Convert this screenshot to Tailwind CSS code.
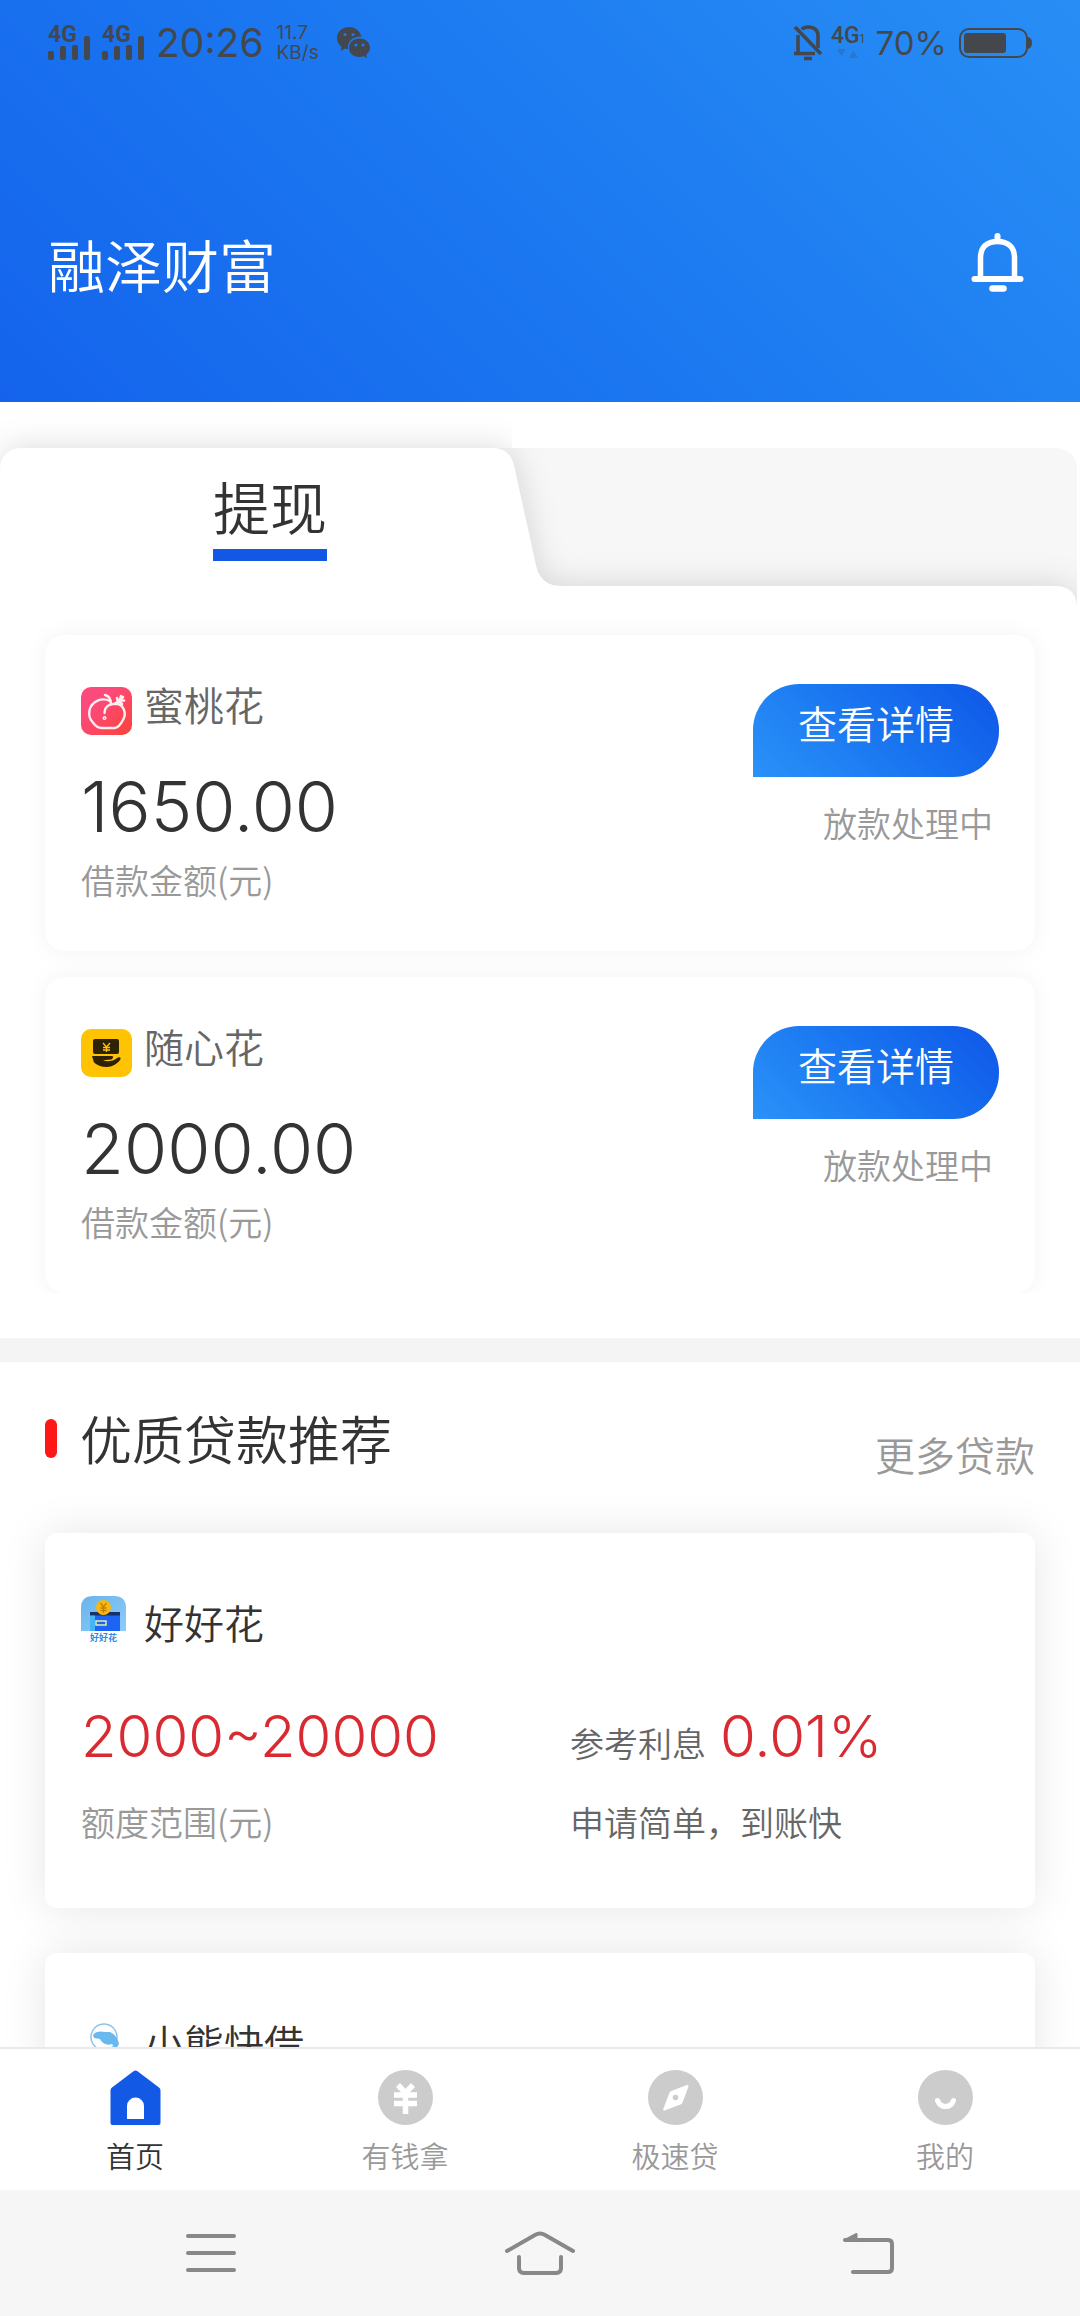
<!DOCTYPE html>
<html lang="zh-CN">
<head>
<meta charset="utf-8">
<meta name="viewport" content="width=device-width, initial-scale=1">
<title>融泽财富</title>
<script src="https://cdn.jsdelivr.net/npm/@tailwindcss/browser@4"></script>
</head>
<body class="flex h-screen flex-col overflow-hidden bg-white font-['Noto_Sans_CJK_SC',sans-serif] font-[350] text-[#333333]">

<header class="flex h-[402px] shrink-0 flex-col bg-linear-45 from-[#1563ec] to-[#288ef5]">
  <!-- Status bar -->
  <div class="flex h-[86px] items-center justify-between pr-[48px] pl-[48px] font-['Inter',sans-serif] font-normal text-[#44484c]">
    <div class="flex items-center">
      <svg class="h-[52px] w-[44px]" viewBox="0 -8 44 52" fill="currentColor" role="img" aria-label="4G">
        <text x="0" y="17" font-size="23" font-weight="700" font-family="Roboto, sans-serif">4G</text>
        <rect y="26" width="6" height="9" rx="2"/><rect x="12" y="21" width="6" height="14" rx="2"/><rect x="24" y="20" width="6" height="15" rx="2"/><rect x="36" y="11" width="6" height="24" rx="2"/>
      </svg>
      <svg class="ml-[10px] h-[52px] w-[44px]" viewBox="0 -8 44 52" fill="currentColor" role="img" aria-label="4G">
        <text x="0" y="17" font-size="23" font-weight="700" font-family="Roboto, sans-serif">4G</text>
        <rect y="26" width="6" height="9" rx="2"/><rect x="12" y="21" width="6" height="14" rx="2"/><rect x="24" y="20" width="6" height="15" rx="2"/><rect x="36" y="11" width="6" height="24" rx="2"/>
      </svg>
      <span class="ml-[10px] text-[39px] leading-[48px]">20:26</span>
      <span class="ml-[13px] flex flex-col text-[19px] leading-[20px]"><span>11.7</span><span>KB/s</span></span>
      <svg class="ml-[18px] h-[32px] w-[34px]" viewBox="0 0 34 32" fill="currentColor" role="img" aria-label="微信">
        <path d="M12 0C5 0 0 5 0 11c0 4 2 7 4.500 9L3.500 24l4.500-2.500q1.500.5 3 .5C10 14 16 9.500 24.500 9.500 23 4 18 0 12 0Z"/>
        <path d="M22.500 11.500C16.500 11.500 12 15.500 12 21s4.500 9 10.500 9q2 0 4-.7L30 31l-.8-3.500C31.500 26 33 23.500 33 21c0-5.500-4.500-9.500-10.500-9.500Z"/>
        <g fill="#1f78f0"><circle cx="8" cy="7.500" r="1.600"/><circle cx="16" cy="7.500" r="1.600"/><circle cx="19" cy="18" r="1.600"/><circle cx="26" cy="18" r="1.600"/></g>
      </svg>
    </div>
    <div class="flex items-center">
      <svg class="h-[36px] w-[30px]" viewBox="0 0 30 36" fill="none" stroke="currentColor" stroke-width="3.600" role="img" aria-label="静音">
        <path d="M5 28V10M9 4.500Q11 2 15 2c7 0 10 4 10 9v12M1 28.500h21M2 2l26 27"/><path d="M11 33.500h8"/>
      </svg>
      <svg class="ml-[8px] h-[52px] w-[36px]" viewBox="0 -8 36 52" fill="currentColor" role="img" aria-label="4G">
        <text x="0" y="18" font-size="23" font-weight="500" font-family="Roboto, sans-serif">4G</text>
        <text x="28" y="18" font-size="12" font-family="Roboto, sans-serif">1</text>
        <g opacity=".25"><path d="M6 24h9l-4.500 7zM18 33h9l-4.500-7z"/></g>
      </svg>
      <span class="ml-[9px] text-[33px] leading-[48px]">70%</span>
      <svg class="ml-[12px] h-[30px] w-[73px]" viewBox="0 0 73 30" role="img" aria-label="电量">
        <rect x="1" y="1" width="67" height="28" rx="9" fill="none" stroke="currentColor" stroke-width="2"/>
        <rect x="5" y="5" width="42" height="20" rx="3" fill="currentColor"/><path d="M69 9q4 1 4 6t-4 6z" fill="currentColor"/>
      </svg>
    </div>
  </div>
  <!-- Title -->
  <div class="flex flex-1 items-start justify-between pt-[137px] pr-[56px] pl-[48px] text-white">
    <h1 class="text-[57px] leading-[80px]">融泽财富</h1>
    <button type="button" aria-label="消息" class="mt-[8px]">
      <svg class="h-[62px] w-[54px]" viewBox="0 0 54 62" fill="none" stroke="white">
        <path d="M10.500 46V27C10.500 16 17 10.500 27.500 10.500S44.500 16 44.500 27v19" stroke-width="5.500"/>
        <path d="M27.500 5v5" stroke-width="6" stroke-linecap="round"/><path d="M4.500 48h46" stroke-width="6" stroke-linecap="round"/><path d="M22.500 57.500h11" stroke-width="6.500" stroke-linecap="round"/>
      </svg>
    </button>
  </div>
</header>

<main class="min-h-0 flex-1 overflow-hidden">
  <section class="relative overflow-hidden pt-[46px]">
    <!-- Folder-tab background -->
    <svg class="absolute top-0 left-0 h-[320px] w-full" viewBox="0 0 1080 320" preserveAspectRatio="none" aria-hidden="true">
      <defs><filter id="tabShadow" x="-10%" y="-20%" width="120%" height="140%"><feDropShadow dx="0" dy="0" stdDeviation="16" flood-color="#000" flood-opacity=".15"/></filter>
      <clipPath id="tabClip"><path d="M0 0H512V46H1054Q1077 46 1077 69V320H0Z"/></clipPath></defs>
      <path d="M440 46H1054Q1077 46 1077 69V210H440Z" fill="#f7f7f7"/>
      <g clip-path="url(#tabClip)"><path d="M0 70Q0 46 24 46H492Q510 46 514 64L536 164Q541 184 560 184H1054Q1077 184 1077 207V420H0Z" fill="white" filter="url(#tabShadow)"/></g>
    </svg>
    <div class="relative grid h-[138px] grid-cols-2" role="tablist">
      <button type="button" role="tab" aria-selected="true" class="flex flex-col items-center pt-[17px]">
        <span class="text-[57px] leading-[80px]">提现</span>
        <span class="mt-[4px] h-[12px] w-[114px] bg-[#1258e4]"></span>
      </button>
    </div>

    <div class="relative mb-[45px] flex flex-col gap-[26px] overflow-hidden px-[45px] pt-[49px]">
      <article class="flex items-start justify-between rounded-[20px] bg-white px-[36px] shadow-[0_0_24px_rgba(0,0,0,0.05)]">
        <div class="pt-[45px] pb-[47px]">
          <div class="flex items-start gap-[12px]">
            <svg class="mt-[7px] h-[48px] w-[51px]" viewBox="0 0 51 48" aria-hidden="true">
              <defs><linearGradient id="peach" x1="0" y1="0" x2="1" y2="1"><stop offset=".3" stop-color="#fd4a7c"/><stop offset="1" stop-color="#fb4338"/></linearGradient></defs>
              <rect width="51" height="48" rx="10" fill="url(#peach)"/>
              <g fill="none" stroke="#ffeef2" stroke-width="2.400" stroke-linecap="round" stroke-linejoin="round"><path d="M29 14C21 10 11 14 8.500 23c-1 6 1 10 3 12 3 4 5 6 9 6h13c4 0 7-5 9-9 3-6 0-14-6-15-7-1-13 2-13 9"/><path d="M24 8c4 1 6 4 6 9"/><circle cx="23.500" cy="31" r="1.300" stroke-width="1.500"/><path d="m34 17 8-7M36 11l1 4M40 9l-1 4M43 13.500h-4M41 17l-3-3" stroke-width="2.600"/></g>
            </svg>
            <h2 class="text-[40px] leading-[48px] text-[#666666]">蜜桃花</h2>
          </div>
          <p class="mt-[32px] font-['Inter',sans-serif] text-[70px] leading-[80px] font-light">1650.00</p>
          <p class="mt-[9px] text-[34px] leading-[48px] text-[#999999]">借款金额(元)</p>
        </div>
        <div class="flex flex-col items-end pt-[49px]">
          <button type="button" class="rounded-[46px] rounded-bl-none bg-linear-45 from-[#2b92f8] to-[#1156e8] px-[45px] pt-[14px] pb-[31px] text-[39px] leading-[48px] text-white">查看详情</button>
          <p class="mt-[22px] pr-[6px] text-[34px] leading-[48px] text-[#999999]">放款处理中</p>
        </div>
      </article>

      <article class="flex items-start justify-between rounded-[20px] bg-white px-[36px] shadow-[0_0_24px_rgba(0,0,0,0.05)]">
        <div class="pt-[45px] pb-[47px]">
          <div class="flex items-start gap-[12px]">
            <svg class="mt-[7px] h-[48px] w-[51px]" viewBox="0 0 51 48" aria-hidden="true">
              <rect width="51" height="48" rx="10" fill="#fec303"/>
              <rect x="12" y="10" width="26" height="15" rx="2" fill="#2f2104"/>
              <path d="m22 14 3.500 4 3.500-4M25.500 18v5M22 18.500h7M22 21h7" fill="none" stroke="#fec303" stroke-width="1.300"/>
              <path d="M11 27h20c2 0 1 3-1 3.500l-8 .7c4 1.500 8 1 11-.2l4-2.500c2-1 3.500.3 2 2.500-3 4-8 7-13 7-6 0-10-2-13-4.500Z" fill="#2f2104"/>
            </svg>
            <h2 class="text-[40px] leading-[48px] text-[#666666]">随心花</h2>
          </div>
          <p class="mt-[32px] font-['Inter',sans-serif] text-[70px] leading-[80px] font-light">2000.00</p>
          <p class="mt-[9px] text-[34px] leading-[48px] text-[#999999]">借款金额(元)</p>
        </div>
        <div class="flex flex-col items-end pt-[49px]">
          <button type="button" class="rounded-[46px] rounded-bl-none bg-linear-45 from-[#2b92f8] to-[#1156e8] px-[45px] pt-[14px] pb-[31px] text-[39px] leading-[48px] text-white">查看详情</button>
          <p class="mt-[22px] pr-[6px] text-[34px] leading-[48px] text-[#999999]">放款处理中</p>
        </div>
      </article>
    </div>
  </section>

  <div class="h-[24px] bg-[#f4f4f4]"></div>

  <section class="px-[45px] pt-[40px]">
    <div class="flex items-start justify-between">
      <div class="flex items-center gap-[23px]">
        <span class="h-[39px] w-[12px] rounded-full bg-[#fd1717]"></span>
        <h2 class="text-[52px] leading-[72px]">优质贷款推荐</h2>
      </div>
      <a href="#" class="mt-[24px] text-[40px] leading-[56px] text-[#999999]">更多贷款</a>
    </div>

    <div class="mt-[51px] flex flex-col gap-[45px]">
      <article class="rounded-[12px] bg-white px-[36px] pt-[63px] pb-[62px] shadow-[0_0_45px_rgba(0,0,0,0.1)]">
        <div class="flex items-start gap-[18px]">
          <svg class="h-[50px] w-[45px]" viewBox="0 0 45 50" aria-hidden="true">
            <defs><linearGradient id="wallet" x1="0" y1="0" x2="1" y2="1"><stop stop-color="#69b3ec"/><stop offset="1" stop-color="#8ccdf8"/></linearGradient></defs>
            <path d="M0 35V12Q0 0 12 0h21q12 0 12 12v23Z" fill="url(#wallet)"/>
            <path d="M9 16h30v5H9z" fill="#17306f"/><circle cx="22.500" cy="11.500" r="7.500" fill="#f8b90d"/><path d="m19.500 7 3 4 3-4M22.500 11v6M19.500 12h6M19.500 14.500h6" stroke="#c67d08" stroke-width="1.300" fill="none"/>
            <path d="M9 19.500h30V35H9z" fill="#1d63f4"/><path d="M9 19.500h5V35H9z" fill="#43b4f6"/><path d="M15 25h10v4H15z" fill="#1d63f4" stroke="#dff0a8" stroke-width="1.500"/>
            <text x="22.500" y="44.500" text-anchor="middle" font-size="9" font-weight="700" fill="#2f8ae0">好好花</text>
          </svg>
          <h3 class="pt-[2px] text-[40px] leading-[48px]">好好花</h3>
        </div>
        <div class="mt-[58px] grid grid-cols-2 gap-x-[60px]">
          <p class="font-['Inter',sans-serif] text-[58px] leading-[64px] font-light text-[#d92a31]">2000~20000</p>
          <p class="flex items-baseline gap-[14px] leading-[64px] whitespace-nowrap text-[#666666]"><span class="text-[34px] leading-[48px]">参考利息</span><span class="font-['Inter',sans-serif] text-[58px] leading-[64px] font-light text-[#d92a31]">0.01%</span></p>
        </div>
        <div class="mt-[30px] grid grid-cols-2 gap-x-[60px] text-[34px] leading-[48px]">
          <p class="text-[#999999]">额度范围(元)</p>
          <p class="text-[#666666]">申请简单，到账快</p>
        </div>
      </article>

      <article class="rounded-[12px] bg-white px-[36px] pt-[63px] pb-[62px] shadow-[0_0_45px_rgba(0,0,0,0.1)]">
        <div class="flex items-start gap-[18px]">
          <svg class="h-[45px] w-[45px]" viewBox="0 0 45 45" aria-hidden="true">
            <circle cx="23" cy="21" r="13" fill="none" stroke="#8dc4ec" stroke-width="1.500"/>
            <path d="M12 19c3-4 8-4 12-3l5 0c5 2 8 7 9 12l-3 5-4-5c-5 2-10-1-12-5l-6-1Z" fill="#69b9ef"/>
          </svg>
          <h3 class="pt-[2px] text-[40px] leading-[48px]">小熊快借</h3>
        </div>
      </article>
    </div>
  </section>
</main>

<!-- App tab bar -->
<nav class="relative grid h-[143px] shrink-0 grid-cols-4 border-t-2 border-[#e9e9e9] bg-white text-[29px] leading-[40px] text-[#999999]">
  <a href="#" aria-current="page" class="flex flex-col items-center gap-[10px] pt-[21px] text-[#333333]">
    <svg class="size-[55px]" viewBox="0 0 55 55" aria-hidden="true"><path d="M27.500.5q1 0 2 .8L51 17.500q1.500 1 1.500 3V53q0 2-2 2h-46q-2 0-2-2V20.500q0-2 1.500-3L25.500 1.300q1-.8 2-.8Z" fill="#125ae6"/><path d="M19 49V36a8.500 8.500 0 0 1 17 0v13Z" fill="white"/></svg>
    <span>首页</span>
  </a>
  <a href="#" class="flex flex-col items-center gap-[10px] pt-[21px]">
    <svg class="size-[55px]" viewBox="0 0 55 55" aria-hidden="true"><circle cx="27.500" cy="27.500" r="27.500" fill="#cccccc"/><path d="m20 15 7.500 8 7.500-8M27.500 22v22M16 25h23M16 33.500h23" fill="none" stroke="white" stroke-width="5.500"/></svg>
    <span>有钱拿</span>
  </a>
  <a href="#" class="flex flex-col items-center gap-[10px] pt-[21px]">
    <svg class="size-[55px]" viewBox="0 0 55 55" aria-hidden="true"><circle cx="27.500" cy="27.500" r="27.500" fill="#cccccc"/><path d="M39 15q2-.5 1.500 1.500l-6 16q-.5 1.500-2 2l-16 6q-2 .5-1.200-1.500l6-16q.6-1.500 2-2Z" fill="white"/><circle cx="27.500" cy="27.500" r="2.800" fill="#cccccc"/></svg>
    <span>极速贷</span>
  </a>
  <a href="#" class="flex flex-col items-center gap-[10px] pt-[21px]">
    <svg class="size-[55px]" viewBox="0 0 55 55" aria-hidden="true"><circle cx="27.500" cy="27.500" r="27.500" fill="#cccccc"/><path d="M19.500 30.500c3 8 13 8 16 0" fill="none" stroke="white" stroke-width="5" stroke-linecap="round"/></svg>
    <span>我的</span>
  </a>
</nav>

<!-- System navigation -->
<nav class="relative grid h-[126px] shrink-0 grid-cols-3 items-center justify-items-center bg-[#f6f6f6] px-[46px] text-[#888888]">
  <button type="button" aria-label="最近任务"><svg class="h-[44px] w-[50px]" viewBox="0 0 50 44" fill="none" stroke="currentColor" stroke-width="4" stroke-linecap="round"><path d="M2 5h46M2 22h46M2 39h46"/></svg></button>
  <button type="button" aria-label="主屏幕"><svg class="h-[44px] w-[70px]" viewBox="0 0 70 44" fill="none" stroke="currentColor" stroke-width="4" stroke-linecap="round" stroke-linejoin="round"><path d="M2 20 30 4q5-3 10 0l28 16M14 26v11q0 5 5 5h32q5 0 5-5V26"/></svg></button>
  <button type="button" aria-label="返回"><svg class="h-[44px] w-[52px]" viewBox="0 0 52 44" fill="none" stroke="currentColor" stroke-width="4" stroke-linecap="round" stroke-linejoin="round"><path d="M10 41h35q4 0 4-4V13q0-4-4-4H2"/><path d="M2 9 13.500 3v6Z" fill="currentColor" stroke-width="2"/></svg></button>
</nav>
</body>
</html>
